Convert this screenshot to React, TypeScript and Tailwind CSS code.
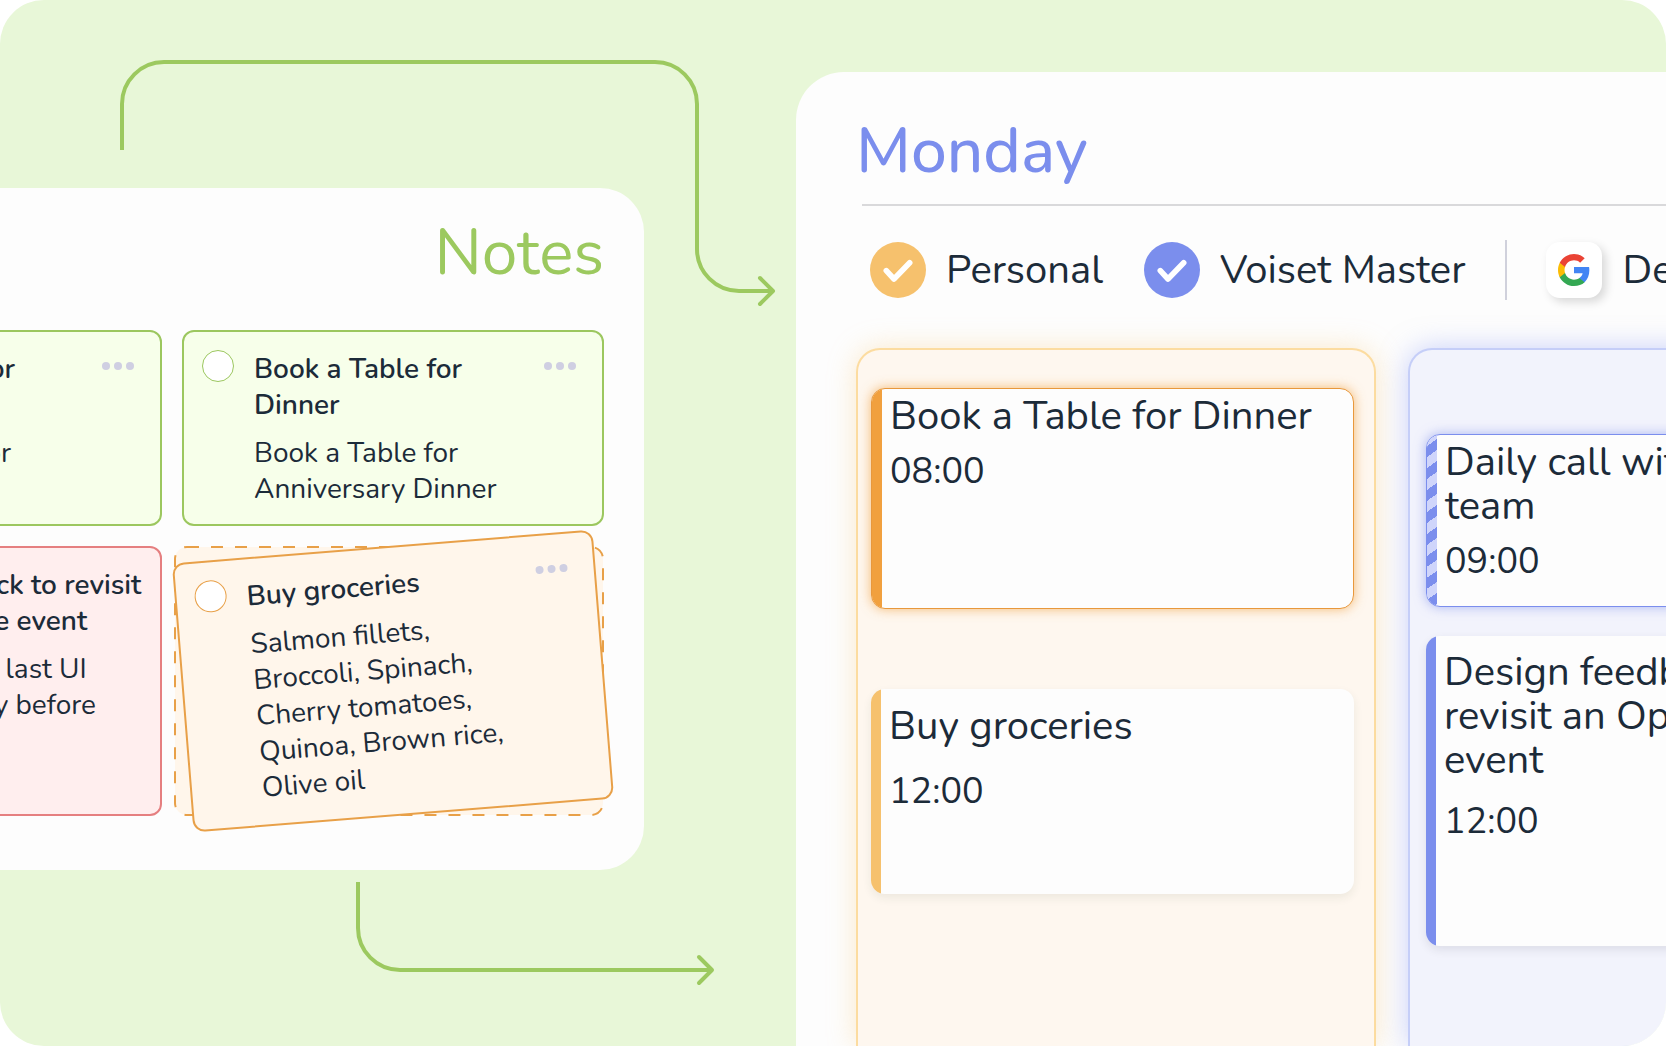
import { ReactNode } from 'react'

type NoteProps = {
    id: string,
    title: string,
    text: string,
    tone: string,
    circle: string,
    textWidth?: string,
    menu?: boolean
}

type EventProps = {
    title: string,
    time: string,
    card: string,
    stripe: string,
    body: string
}

const notes: NoteProps[] = [
    { id: 'table-dinner', title: 'Book a Table for Dinner', text: 'Book a Table for Dinner', tone: 'border-[#9cc75f] bg-[#f7ffea]', circle: 'border-[#9cc75f]', menu: true },
    { id: 'table-anniversary', title: 'Book a Table for Dinner', text: 'Book a Table for Anniversary Dinner', tone: 'border-[#9cc75f] bg-[#f7ffea]', circle: 'border-[#9cc75f]', menu: true },
    { id: 'design-feedback', title: 'Design feedback to revisit an Open House event', text: 'Check over the last UI updates quickly before', tone: 'w-[422px] justify-self-end border-[#e57f80] bg-[#ffeeee]', circle: 'border-[#e57f80]', textWidth: 'w-[344px]' },
]

const groceries: NoteProps = { id: 'groceries', title: 'Buy groceries', text: 'Salmon fillets, Broccoli, Spinach, Cherry tomatoes, Quinoa, Brown rice, Olive oil', tone: 'border-[#e8a048] bg-[#fff6eb]', circle: 'border-[#e8a048]', menu: true }

const personalEvents: EventProps[] = [
    { title: 'Book a Table for Dinner', time: '08:00', card: 'h-[221px] border border-[#e8983c] shadow-[0_0_12px_rgba(241,160,62,0.7)]', stripe: 'bg-[#f1a03e]', body: 'pt-[5px] gap-3' },
    { title: 'Buy groceries', time: '12:00', card: 'h-[205px] shadow-[0_4px_10px_rgba(40,60,40,0.08)]', stripe: 'bg-[#f6c16d]', body: 'pt-[15px] gap-[22px]' },
]

const masterEvents: EventProps[] = [
    { title: 'Daily call with the design team', time: '09:00', card: 'h-[173px] border border-[#7b8eed] shadow-[0_0_12px_rgba(123,142,237,0.6)]', stripe: 'bg-[repeating-linear-gradient(145deg,#cfd5fb_0px,#cfd5fb_9px,#7b8eed_9px,#7b8eed_18px)]', body: 'pt-[5px] gap-3' },
    { title: 'Design feedback to revisit an Open House event', time: '12:00', card: 'h-[310px] shadow-[0_4px_10px_rgba(40,40,60,0.1)]', stripe: 'bg-[#7b8eed]', body: 'pt-[14px] pr-8 gap-[18px]' },
]

const Note = ({ id, title, text, tone, circle, textWidth = 'w-[260px]', menu }: NoteProps) => (
    <article className={`flex h-full rounded-[12px] border-2 pl-[18px] pr-[26px] pt-[18px] pb-4 ${tone}`}>
        <input id={id} type="checkbox" className={`size-8 shrink-0 appearance-none rounded-full border bg-white ${circle}`} />
        <div className={`ml-5 flex shrink-0 flex-col gap-3 pt-px text-[28px] leading-9 ${textWidth}`}>
            <label htmlFor={id} className="font-semibold">{title}</label>
            <p>{text}</p>
        </div>
        {menu && <button aria-label="Note menu" className="ml-auto flex h-8 items-center gap-1">
            <span className="size-2 rounded-full bg-[#cfcfe2]" />
            <span className="size-2 rounded-full bg-[#cfcfe2]" />
            <span className="size-2 rounded-full bg-[#cfcfe2]" />
        </button>}
    </article>
)

const EventCard = ({ title, time, card, stripe, body }: EventProps) => (
    <article className={`flex overflow-hidden rounded-[14px] bg-[#fdfdfd] ${card}`}>
        <div className={`w-[10px] shrink-0 ${stripe}`} />
        <div className={`flex flex-col pl-2 ${body}`}>
            <h2 className="text-[40px] leading-11">{title}</h2>
            <p className="text-4xl leading-11">{time}</p>
        </div>
    </article>
)

const CheckBadge = ({ color }: { color: string }) => (
    <svg className="size-14 shrink-0" viewBox="0 0 56 56" fill="none">
        <circle cx="28" cy="28" r="28" fill={color} />
        <path d="M16.3 28.6L24 37L39.7 20.8" stroke="#fff" strokeWidth="5.6" strokeLinecap="round" strokeLinejoin="round" />
    </svg>
)

const GoogleLogo = () => (
    <svg className="size-8" viewBox="1 1 22 22">
        <path fill="#4285F4" d="M22.56 12.25c0-.78-.07-1.53-.2-2.25H12v4.26h5.92c-.26 1.37-1.04 2.53-2.21 3.31v2.77h3.57c2.08-1.92 3.28-4.74 3.28-8.09z" />
        <path fill="#34A853" d="M12 23c2.97 0 5.46-.98 7.28-2.66l-3.57-2.77c-.98.66-2.23 1.06-3.71 1.06-2.86 0-5.29-1.93-6.16-4.53H2.18v2.84C3.99 20.53 7.7 23 12 23z" />
        <path fill="#FBBC05" d="M5.84 14.1c-.22-.66-.35-1.36-.35-2.1s.13-1.44.35-2.1V7.06H2.18C1.43 8.55 1 10.22 1 12s.43 3.45 1.18 4.94l3.66-2.84z" />
        <path fill="#EA4335" d="M12 5.38c1.62 0 3.06.56 4.21 1.64l3.15-3.15C17.45 2.09 14.97 1 12 1 7.7 1 3.99 3.47 2.18 7.06l3.66 2.84c.87-2.6 3.3-4.52 6.16-4.52z" />
    </svg>
)

const Calendar = ({ icon, name }: { icon: ReactNode, name: string }) => (
    <div className="flex shrink-0 items-center gap-5 text-[40px] leading-14">
        {icon}
        <span className="whitespace-nowrap">{name}</span>
    </div>
)

const App = () => {
    return (
        <main className="grid min-h-screen grid-cols-[796fr_870fr] overflow-hidden rounded-[44px] bg-[#e8f7d8] font-['Nunito','Lato',sans-serif] text-[#1c2b39]">
            <section className="relative min-w-0 pt-[188px]">
                <svg className="absolute left-[120px] top-[60px]" width="658" height="250" viewBox="0 0 658 250" fill="none" stroke="#9cc95f" strokeWidth="4">
                    <path d="M2 90V44A42 42 0 0 1 44 2H535A42 42 0 0 1 577 44V189A42 42 0 0 0 619 231H653" />
                    <path d="M640 218L653 231L640 244" strokeLinecap="round" strokeLinejoin="round" />
                </svg>
                <div className="mr-[152px] flex justify-end rounded-r-[44px] bg-[#fdfdfd] pr-10 pb-[54px]">
                    <div className="shrink-0">
                        <h1 className="pt-[25px] pb-[37px] text-right text-[64px] leading-20 text-[#9cc95f]">Notes</h1>
                        <div className="grid grid-cols-[427px_422px] grid-rows-[196px_270px] gap-5">
                            {notes.map((note) => <Note key={note.id} {...note} />)}
                            <div className="relative">
                                <svg className="absolute -left-2 top-0 h-full w-[430px]">
                                    <rect x="1" y="1" width="428" height="268" rx="12" fill="#fff6eb" stroke="#e8a048" strokeWidth="2" strokeDasharray="12 12" />
                                </svg>
                                <div className="relative h-full -rotate-[4.6deg]">
                                    <Note {...groceries} />
                                </div>
                            </div>
                        </div>
                    </div>
                </div>
                <svg className="mt-3 ml-[356px]" width="360" height="106" viewBox="0 0 360 106" fill="none" stroke="#9cc95f" strokeWidth="4">
                    <path d="M2 0V46A42 42 0 0 0 44 88H355" />
                    <path d="M343 75L356 88L343 101" strokeLinecap="round" strokeLinejoin="round" />
                </svg>
            </section>
            <section className="mt-[72px] flex min-w-0 flex-col overflow-hidden rounded-tl-[48px] bg-[#fdfdfd] pl-[60px]">
                <h1 className="pt-[39px] pb-[13px] text-[64px] font-medium leading-20 text-[#7b8eed]">Monday</h1>
                <hr className="ml-[6px] border-t-2 border-[#d9d9db]" />
                <div className="flex items-center py-[34px] pl-[14px]">
                    <Calendar icon={<CheckBadge color="#f6c16d" />} name="Personal" />
                    <div className="ml-[41px]">
                        <Calendar icon={<CheckBadge color="#7b8eed" />} name="Voiset Master" />
                    </div>
                    <div className="mr-[39px] ml-10 h-[60px] w-[2px] shrink-0 bg-[#d0d1dc]" />
                    <Calendar icon={<span className="flex size-14 shrink-0 items-center justify-center rounded-[14px] bg-white shadow-[4px_4px_10px_rgba(0,0,0,0.15)]"><GoogleLogo /></span>} name="Design" />
                </div>
                <div className="mt-[14px] flex flex-1 gap-8">
                    <div className="flex w-[520px] shrink-0 flex-col gap-20 rounded-t-[24px] border-2 border-b-0 border-[#fcdca0] bg-[#fef7ef] pt-[38px] pr-5 pl-[13px] shadow-[0_0_28px_rgba(250,205,130,0.4)]">
                        {personalEvents.map((event) => <EventCard key={event.title} {...event} />)}
                    </div>
                    <div className="flex w-[520px] shrink-0 flex-col gap-[29px] rounded-t-[24px] border-2 border-b-0 border-[#c5cef8] bg-[#f2f3fc] pt-[84px] pr-5 pl-4 shadow-[0_0_28px_rgba(150,165,250,0.5)]">
                        {masterEvents.map((event) => <EventCard key={event.title} {...event} />)}
                    </div>
                </div>
            </section>
        </main>
    )
}

export default App
